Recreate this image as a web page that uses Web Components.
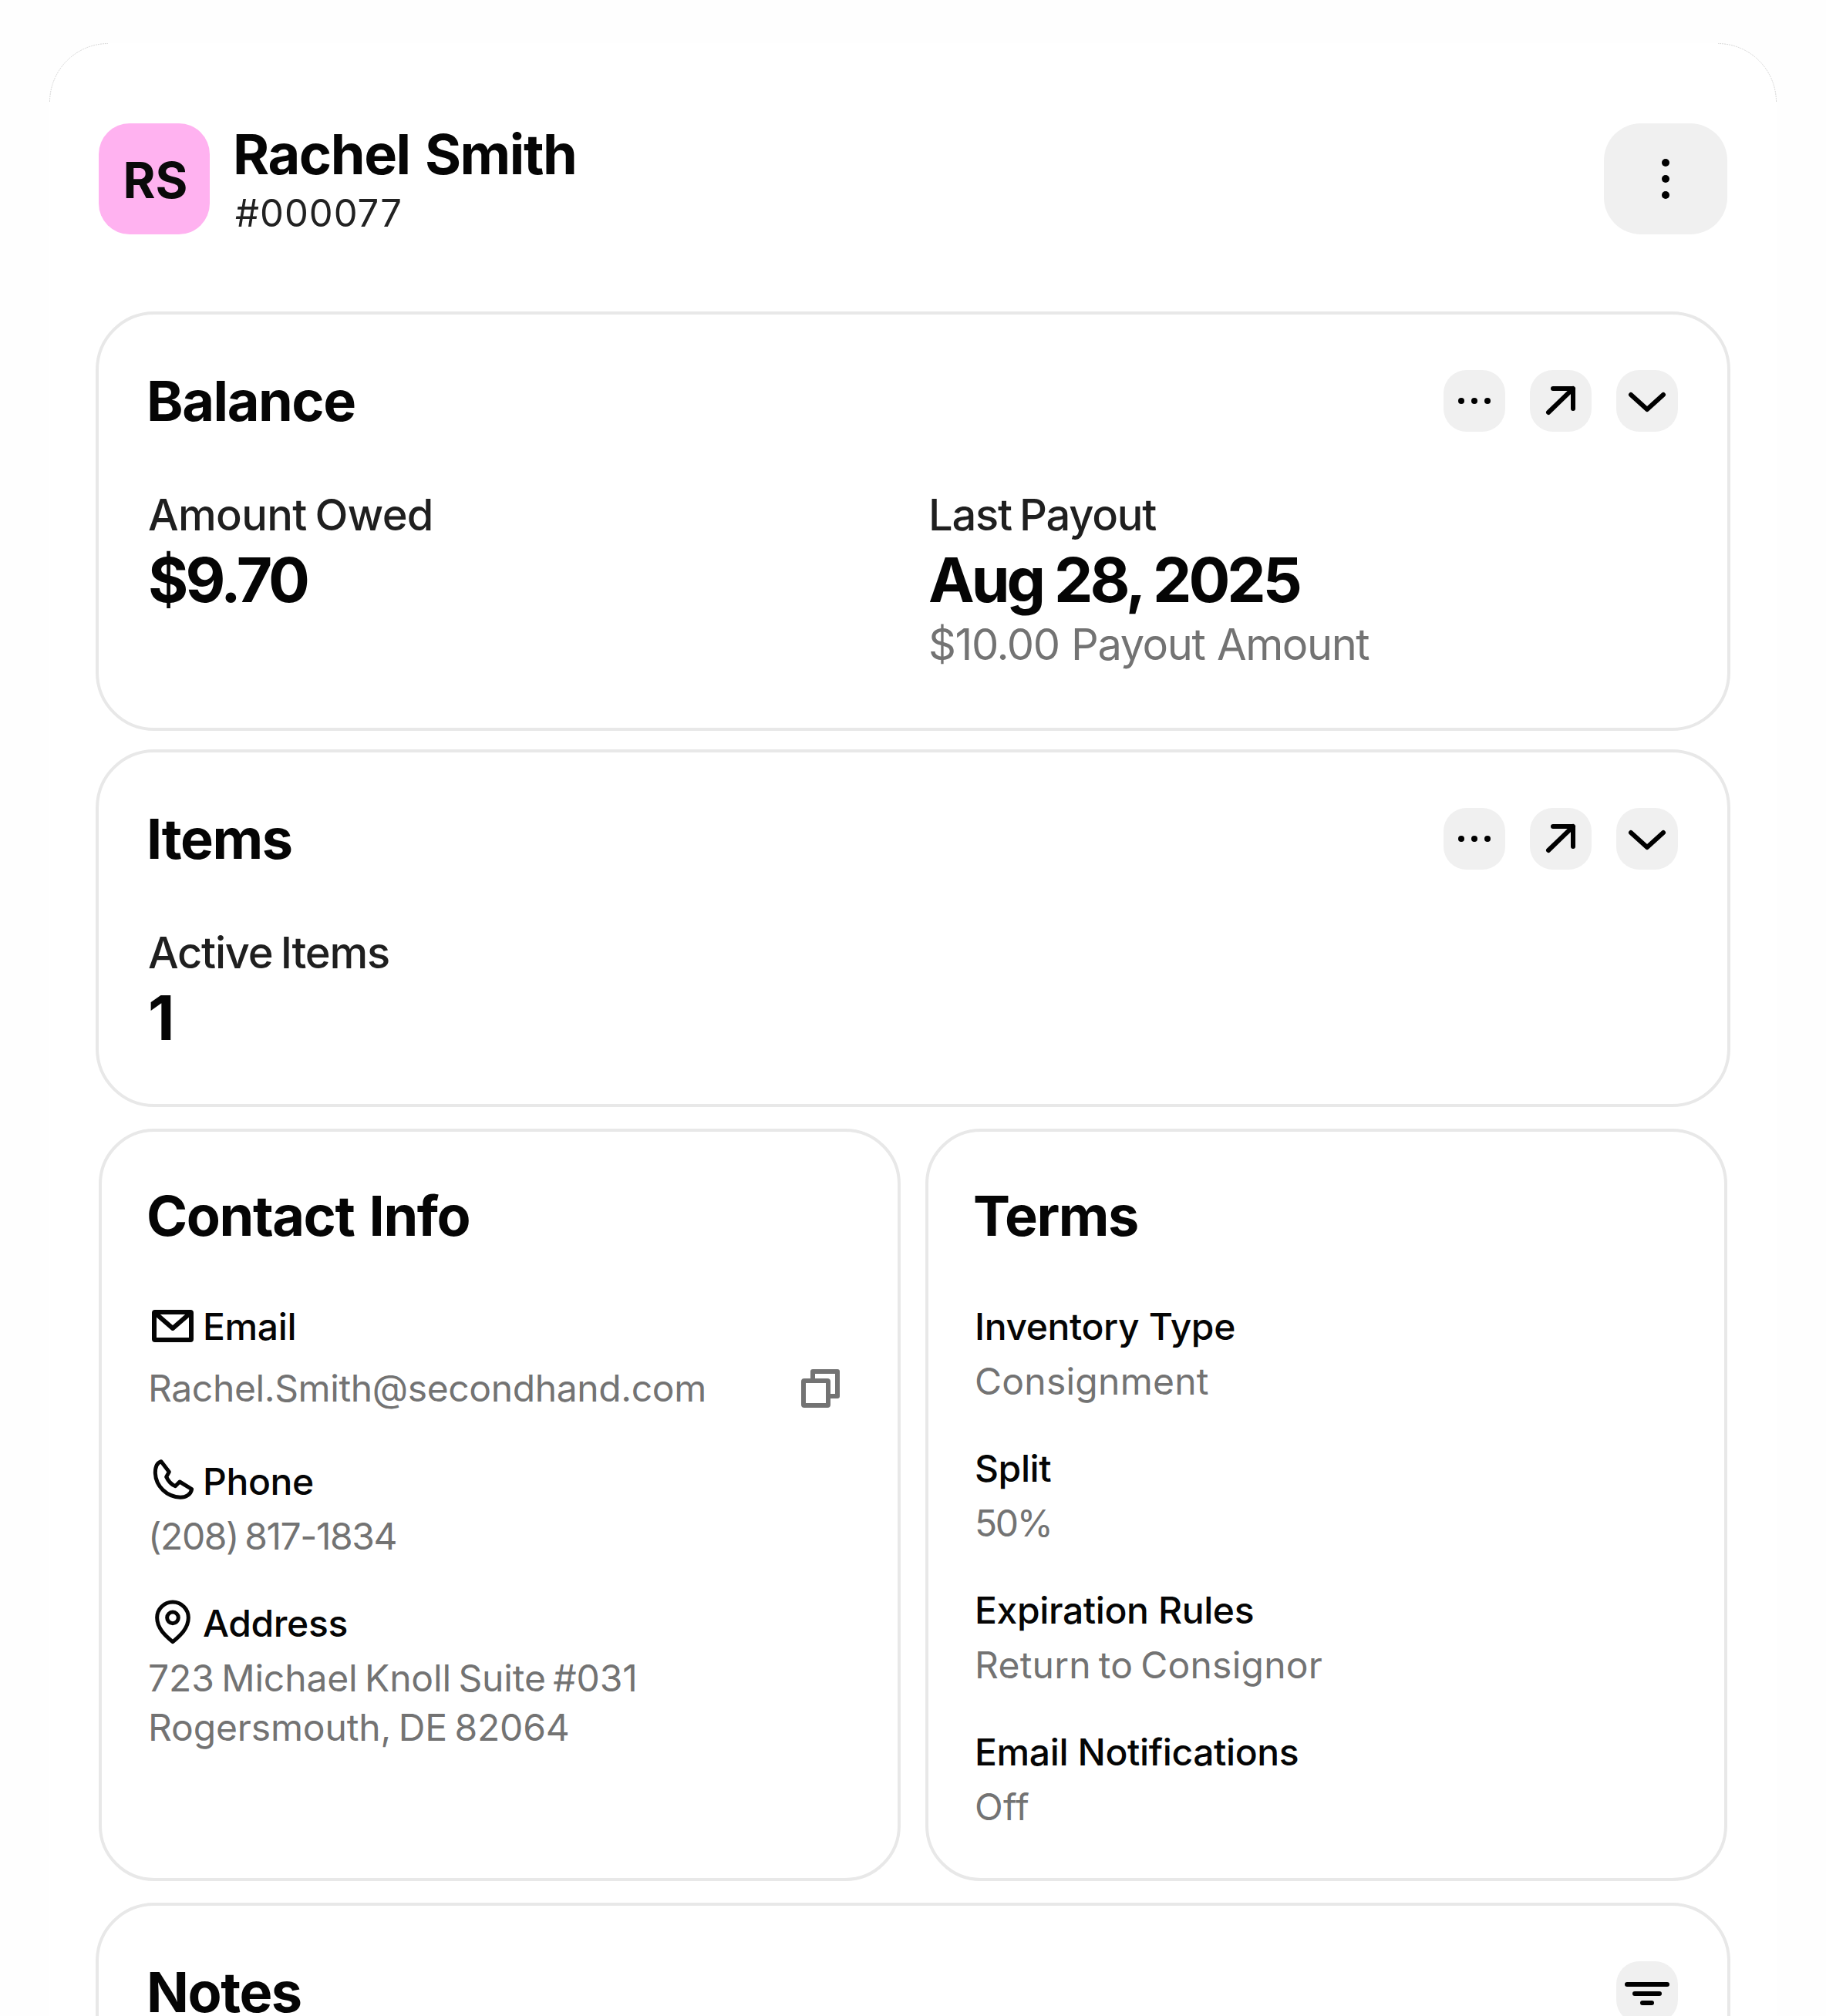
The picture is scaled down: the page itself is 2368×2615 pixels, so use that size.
<!DOCTYPE html>
<html lang="en">
<head>
<meta charset="utf-8">
<title>Rachel Smith</title>
<style>
  html, body { margin: 0; height: 100%; overflow: hidden; background: #fefefe; }
  body { font-family: Inter, "Liberation Sans", sans-serif; color: #050505; }
</style>
</head>
<body>
<consignor-panel>
  <profile-header initials="RS" name="Rachel Smith" code="#000077"></profile-header>

  <section-card heading="Balance" actions="dots,arrow,chevron" wide>
    <div class="stats">
      <stat-block label="Amount Owed" value="$9.70" style="--label-ls:-.012em"></stat-block>
      <stat-block label="Last Payout" value="Aug 28, 2025" note="$10.00 Payout Amount"></stat-block>
    </div>
  </section-card>

  <section-card heading="Items" actions="dots,arrow,chevron" wide>
    <div class="stats">
      <stat-block label="Active Items" value="1"></stat-block>
    </div>
  </section-card>

  <two-up>
    <section-card heading="Contact Info" compact>
      <info-row label="Email" icon="mail" copy><span style="letter-spacing:-.008em">Rachel.Smith@secondhand.com</span></info-row>
      <info-row label="Phone" icon="phone"><span style="letter-spacing:-.03em">(208) 817-1834</span></info-row>
      <info-row label="Address" icon="pin">723 Michael Knoll Suite #031<br>Rogersmouth, DE 82064</info-row>
    </section-card>
    <section-card heading="Terms" compact style="--text-ls:.005em">
      <info-row label="Inventory Type">Consignment</info-row>
      <info-row label="Split"><span style="letter-spacing:-.05em">50%</span></info-row>
      <info-row label="Expiration Rules">Return to Consignor</info-row>
      <info-row label="Email Notifications">Off</info-row>
    </section-card>
  </two-up>

  <section-card heading="Notes" actions="filter" wide tall></section-card>
</consignor-panel>

<script>
const ICONS = {
  kebab: `<circle cx="40" cy="19" r="5"/><circle cx="40" cy="40" r="5"/><circle cx="40" cy="61" r="5"/>`,
  dots: `<circle cx="23" cy="40" r="4"/><circle cx="40" cy="40" r="4"/><circle cx="57" cy="40" r="4"/>`,
  arrow: `<path d="M24 55 56 24M30 24H56V50" fill="none" stroke="currentColor" stroke-width="6" stroke-linecap="round" stroke-linejoin="round"/>`,
  chevron: `<path d="M19 32 40 51 61 32" fill="none" stroke="currentColor" stroke-width="6" stroke-linecap="round" stroke-linejoin="round"/>`,
  filter: `<path d="M14 30H66M24 42H56M34 54H46" fill="none" stroke="currentColor" stroke-width="6" stroke-linecap="round"/>`
};

const GLYPHS = {
  mail: `<svg width="60" height="60" viewBox="0 0 60 60" fill="none" stroke="currentColor" stroke-width="6" stroke-linejoin="round" stroke-linecap="round"><rect x="6" y="12" width="48" height="36" rx="1"/><path d="M7 13 30 33 53 13"/></svg>`,
  phone: `<svg width="60" height="60" viewBox="72 663 180 180" fill="none" stroke="currentColor" stroke-width="15" stroke-linejoin="round"><path d="M117 677C100 682 94 702 94 722C96 775 140 815 192 817C214 817 232 805 236 785L189 756L172 773C158 768 144 752 137 737L148 718Z"/></svg>`,
  pin: `<svg width="60" height="60" viewBox="72 1215 180 180" fill="none" stroke="currentColor" stroke-width="15" stroke-linejoin="round"><path d="M162 1379C140 1360 101 1330 101 1285A61 61 0 0 1 223 1285C223 1330 184 1360 162 1379Z"/><circle cx="162" cy="1285" r="22"/></svg>`
};

class ConsignorPanel extends HTMLElement {
  constructor() {
    super();
    this.attachShadow({ mode: "open" }).innerHTML = `
      <style>
        :host {
          display: flex;
          flex-direction: column;
          gap: 32px;
          position: relative;
          margin: 56px 64px 0;
          padding: 104px 64px 0;
          background: #fff;
          border-radius: 76px 76px 0 0;
          font-family: Inter, "Liberation Sans", sans-serif;
        }
        .corner { position: absolute; top: 0; width: 80px; height: 80px; }
        .corner.left { left: 0; }
        .corner.right { right: 0; transform: scaleX(-1); }
      </style>
      <svg class="corner left" viewBox="0 0 80 80" fill="none" stroke="#c4c4c4" stroke-width=".7"><path d="M.5 76A76 76 0 0 1 76 .5" stroke-dasharray="2 1"/></svg>
      <svg class="corner right" viewBox="0 0 80 80" fill="none" stroke="#c4c4c4" stroke-width=".7"><path d="M.5 76A76 76 0 0 1 76 .5" stroke-dasharray="2 1"/></svg>
      <slot></slot>
    `;
  }
}

class IconBtn extends HTMLElement {
  connectedCallback() {
    const big = this.hasAttribute("big");
    this.attachShadow({ mode: "open" }).innerHTML = `
      <style>
        :host {
          display: flex;
          align-items: center;
          justify-content: center;
          width: ${big ? 160 : 80}px;
          height: ${big ? 144 : 80}px;
          flex: none;
          background: #f0f0f0;
          border-radius: ${big ? 48 : 30}px;
          color: #000;
        }
        svg { width: 80px; height: 80px; fill: currentColor; display: block; }
      </style>
      <svg viewBox="0 0 80 80">${ICONS[this.getAttribute("icon")]}</svg>
    `;
  }
}

class ProfileHeader extends HTMLElement {
  connectedCallback() {
    this.attachShadow({ mode: "open" }).innerHTML = `
      <style>
        :host { display: flex; align-items: flex-start; gap: 32px; height: 144px; margin-bottom: 72px; }
        .avatar {
          width: 144px;
          height: 144px;
          padding: 3px 0 0 3px;
          box-sizing: border-box;
          display: flex;
          align-items: center;
          justify-content: center;
          flex: none;
          background: #ffb2f0;
          border-radius: 40px;
          font-size: 64px;
          font-weight: 700;
          letter-spacing: 0;
          color: #0a0a0a;
        }
        .who { flex: 1; }
        .name { margin-left: -2px; font-size: 72px; line-height: 80px; font-weight: 700; letter-spacing: -0.02em; word-spacing: 0.05em; color: #050505; }
        .code { margin-left: 1px; font-size: 49px; line-height: 74px; color: #222; letter-spacing: 0.02em; }
      </style>
      <div class="avatar">${this.getAttribute("initials")}</div>
      <div class="who">
        <div class="name">${this.getAttribute("name")}</div>
        <div class="code">${this.getAttribute("code")}</div>
      </div>
      <icon-btn icon="kebab" big></icon-btn>
    `;
  }
}

class SectionCard extends HTMLElement {
  connectedCallback() {
    const actions = (this.getAttribute("actions") || "").split(",").filter(Boolean);
    this.attachShadow({ mode: "open" }).innerHTML = `
      <style>
        :host {
          display: block;
          min-width: 0;
          background: #fff;
          border: 4px solid #e8e8e8;
          border-radius: 76px;
          padding: 72px 64px 64px;
        }
        :host([wide]) { margin: -4px; }
        :host([compact]) { padding: 64px 64px 60px 60px; border-radius: 72px; }
        :host([tall]) { min-height: 400px; }
        .top { display: flex; align-items: center; justify-content: space-between; }
        h2 { margin: 0 0 0 -2px; font-size: 72px; line-height: 80px; font-weight: 700; letter-spacing: -0.02em; word-spacing: 0.05em; color: #050505; }
        :host([compact]) h2 { line-height: 90px; margin-bottom: 68px; }
        :host([tall]) h2 { line-height: 60px; }
        .acts { display: flex; gap: 32px; }
      </style>
      <div class="top">
        <h2>${this.getAttribute("heading")}</h2>
        <div class="acts">${actions.map(a => `<icon-btn icon="${a}"></icon-btn>`).join("")}</div>
      </div>
      <slot></slot>
    `;
    this.querySelectorAll(".stats").forEach(el => {
      el.style.cssText = "display:grid;grid-template-columns:1fr 1fr;gap:40px;margin-top:72px";
    });
  }
}

class StatBlock extends HTMLElement {
  connectedCallback() {
    const note = this.getAttribute("note");
    this.attachShadow({ mode: "open" }).innerHTML = `
      <style>
        :host { display: block; }
        .label { font-size: 56px; line-height: 72px; font-weight: 550; letter-spacing: var(--label-ls, -0.022em); word-spacing: -0.06em; color: #1f1f1f; }
        .value { font-size: 80px; line-height: 96px; font-weight: 700; letter-spacing: -0.05em; color: #050505; }
        .note { font-size: 56px; line-height: 72px; margin-bottom: 8px; letter-spacing: -0.025em; word-spacing: 0.02em; color: #737373; }
      </style>
      <div class="label">${this.getAttribute("label")}</div>
      <div class="value">${this.getAttribute("value")}</div>
      ${note ? `<div class="note">${note}</div>` : ""}
    `;
  }
}

class InfoRow extends HTMLElement {
  connectedCallback() {
    const icon = this.getAttribute("icon");
    const copy = this.hasAttribute("copy");
    this.attachShadow({ mode: "open" }).innerHTML = `
      <style>
        :host { display: block; margin-bottom: 50px; }
        :host(:last-child) { margin-bottom: 0; }
        .label { display: flex; align-items: center; gap: 9px; height: 60px; font-size: 48px; line-height: 60px; font-weight: 550; letter-spacing: -0.008em; color: #050505; }
        .label svg { flex: none; margin-left: 2px; }
        .label span { padding-top: 2px; }
        .text { margin-top: 10px; font-size: 48px; line-height: 64px; letter-spacing: var(--text-ls, -0.003em); word-spacing: -0.08em; color: #737373; }
        .text.copy { display: flex; align-items: center; justify-content: space-between; height: 80px; margin-top: 11px; }
        .text.copy svg { margin-right: 11px; }
      </style>
      <div class="label">${icon ? GLYPHS[icon] : ""}<span>${this.getAttribute("label")}</span></div>
      <div class="text${copy ? " copy" : ""}"><span><slot></slot></span>${copy ? `<svg width="50" height="50" viewBox="0 0 50 50" fill="none" stroke="#737373" stroke-width="6" stroke-linejoin="round"><rect x="3" y="15" width="32" height="32" rx="1"/><path d="M15 12V3H47V35H38"/></svg>` : ""}</div>
    `;
  }
}

class TwoUp extends HTMLElement {
  constructor() {
    super();
    this.attachShadow({ mode: "open" }).innerHTML = `
      <style>:host { display: grid; grid-template-columns: 1fr 1fr; gap: 32px; }</style>
      <slot></slot>
    `;
  }
}

customElements.define("consignor-panel", ConsignorPanel);
customElements.define("icon-btn", IconBtn);
customElements.define("profile-header", ProfileHeader);
customElements.define("section-card", SectionCard);
customElements.define("stat-block", StatBlock);
customElements.define("info-row", InfoRow);
customElements.define("two-up", TwoUp);
</script>
</body>
</html>
